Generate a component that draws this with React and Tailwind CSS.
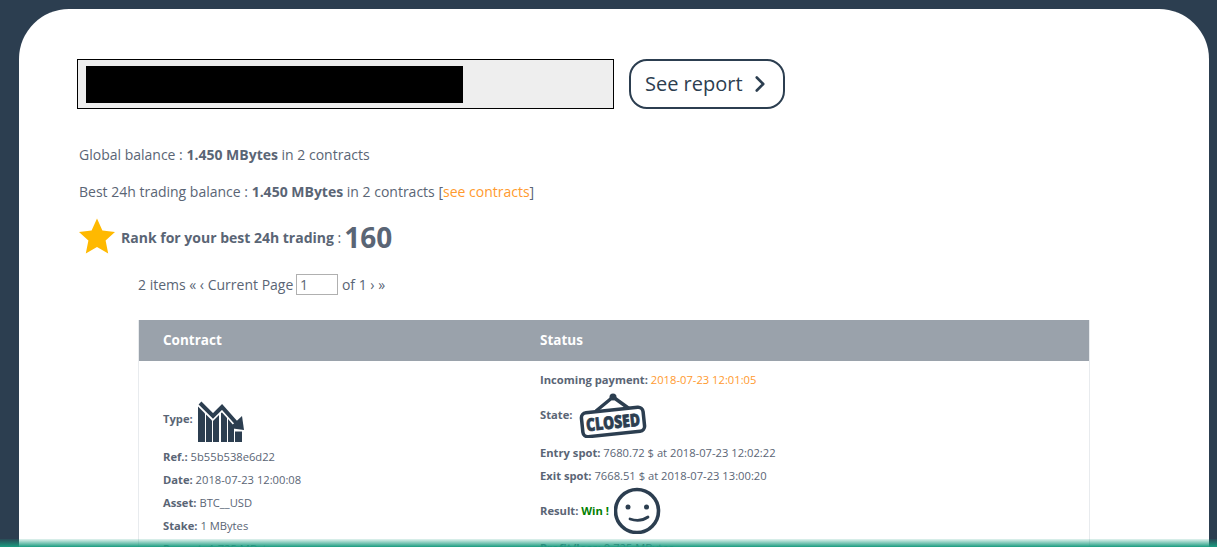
import React from "react";
import { ChevronRight } from "lucide-react";

const Star = () => (
  <svg width="38" height="38" viewBox="0 0 38 38" className="shrink-0 -mt-[3px]">
    <path d="M19 1.5l5.4 12 12.6 1.4-9.4 8.700 2.600 13L19 30.100 7.800 36.600l2.600-13L1 14.900l12.600-1.400z" fill="#ffb900" />
  </svg>
);

const ChartDown = () => (
  <svg width="47" height="43" viewBox="0 0 47 43" className="block">
    <g fill="#2c3e50">
      <path d="M0 6.500L7 13.500V42H0z" />
      <path d="M8 14.500L14 20.500V42H8z" />
      <path d="M15 21L21 15V42H15z" />
      <path d="M23 13L24 12.500L29 18V42H23z" />
      <path d="M30 19L36 26V42H30z" />
      <path d="M37 31.500H44V42H37z" />
    </g>
    <path d="M2 3L15 16L24 7L41 26" fill="none" stroke="#2c3e50" strokeWidth="4" />
    <path d="M46 30L31 28L44 16z" fill="#2c3e50" />
  </svg>
);

const ClosedSign = () => (
  <svg width="69" height="47" viewBox="0 0 69 47" className="block">
    <circle cx="35" cy="6" r="3.500" fill="#2c3e50" />
    <path d="M35 6L18 20M35 6L53 19" stroke="#2c3e50" strokeWidth="3.500" fill="none" />
    <g transform="rotate(-6 35 31)">
      <rect x="4" y="19" width="62" height="24" rx="5" fill="#fff" stroke="#2c3e50" strokeWidth="3.500" />
      <text x="35" y="37.500" textAnchor="middle" fontFamily="'Open Sans', sans-serif" fontWeight="800" fontSize="17.500" fill="#2c3e50" stroke="#2c3e50" strokeWidth="0.700" textLength="54" lengthAdjust="spacingAndGlyphs">CLOSED</text>
    </g>
  </svg>
);

const Smile = () => (
  <svg width="47" height="47" viewBox="0 0 47 47" className="block">
    <circle cx="23" cy="24" r="21.500" fill="none" stroke="#2c3e50" strokeWidth="3.600" />
    <circle cx="14" cy="20" r="2.500" fill="#2c3e50" />
    <circle cx="32.500" cy="20" r="2.500" fill="#2c3e50" />
    <path d="M16 32c6 2 13 1.500 18-2" fill="none" stroke="#2c3e50" strokeWidth="2.800" strokeLinecap="round" />
  </svg>
);

export default function App() {
  return (
    <div className="relative h-[547px] overflow-hidden bg-[#2c3e50] pl-[19px] pr-[8px] pt-[9px] font-['Open_Sans',sans-serif] text-[#5a6575]">
      <main className="h-[700px] rounded-t-[50px] bg-white pl-[58px] pt-[50px]">
        <div className="flex items-center gap-[15px]">
          <div className="flex h-[50px] w-[537px] items-center border border-black bg-[#eeeeee] pl-2">
            <div className="h-[37px] w-[377px] bg-black" />
          </div>
          <button className="flex h-[50px] w-[156px] items-center rounded-[18px] border-2 border-[#2c3e50] pl-[14px] text-[20px] text-[#2c3e50]">
            See report
            <ChevronRight size={26} strokeWidth={2.400} className="ml-[4px]" />
          </button>
        </div>

        <p className="ml-[2px] mt-[35px] text-[14px] leading-[21px]">
          Global balance : <b>1.450 MBytes</b> in 2 contracts
        </p>
        <p className="ml-[2px] mt-[16px] text-[14px] leading-[21px]">
          Best 24h trading balance : <b>1.450 MBytes</b> in 2 contracts [<span className="text-[#ff9a2e]">see contracts</span>]
        </p>
        <div className="mt-[16px] flex h-[38px] items-center pl-[1px] text-[14px]">
          <Star />
          <span className="ml-[5px]"><b>Rank for your best 24h trading</b> : </span>
          <b className="ml-[3px] text-[28px] leading-none">160</b>
        </div>

        <div className="ml-[61px] mt-[17px] flex h-[23px] items-center text-[14px] whitespace-pre">
          2 items « ‹ Current Page <input readOnly value="1" className="-ml-[1px] mr-[4px] h-[21px] w-[42px] border border-[#b0b0b0] px-[3px] text-[14px] outline-none" />of 1 › »
        </div>

        <section className="ml-[61px] mt-[24px] w-[952px] border-x border-[#e8ebee]">
          <div className="grid h-[41px] grid-cols-[377px_1fr] items-center bg-[#9aa2ab] pl-6 text-[13.500px] font-bold text-white">
            <span>Contract</span>
            <span>Status</span>
          </div>
          <div className="grid grid-cols-[377px_1fr] pl-6 text-[11.200px] leading-[23px]">
            <div className="pt-[39px]">
              <div className="flex items-center gap-[5px]">
                <b className="-mt-[6px]">Type:</b>
                <ChartDown />
              </div>
              <p className="mt-[2px]"><b>Ref.:</b> 5b55b538e6d22</p>
              <p><b>Date:</b> 2018-07-23 12:00:08</p>
              <p><b>Asset:</b> BTC__USD</p>
              <p><b>Stake:</b> 1 MBytes</p>
              <p><b>Payout:</b> 1.725 MBytes</p>
            </div>
            <div className="pt-[7px]">
              <p><b>Incoming payment:</b> <span className="text-[#ff9a2e]">2018-07-23 12:01:05</span></p>
              <div className="flex items-center gap-[6px]">
                <b>State:</b>
                <ClosedSign />
              </div>
              <p className="mt-[3px]"><b>Entry spot:</b> 7680.72 $ at 2018-07-23 12:02:22</p>
              <p><b>Exit spot:</b> 7668.51 $ at 2018-07-23 13:00:20</p>
              <div className="flex items-center gap-[5px]">
                <span><b>Result:</b> <b className="text-[#008000]">Win !</b></span>
                <Smile />
              </div>
              <p className="mt-[2px]"><b>Profit/loss:</b> 0.725 MBytes</p>
            </div>
          </div>
        </section>
      </main>
      <div className="absolute inset-x-0 bottom-0 h-[8px] bg-gradient-to-t from-[#1a9c80] to-[#1a9c8020]" />
    </div>
  );
}
